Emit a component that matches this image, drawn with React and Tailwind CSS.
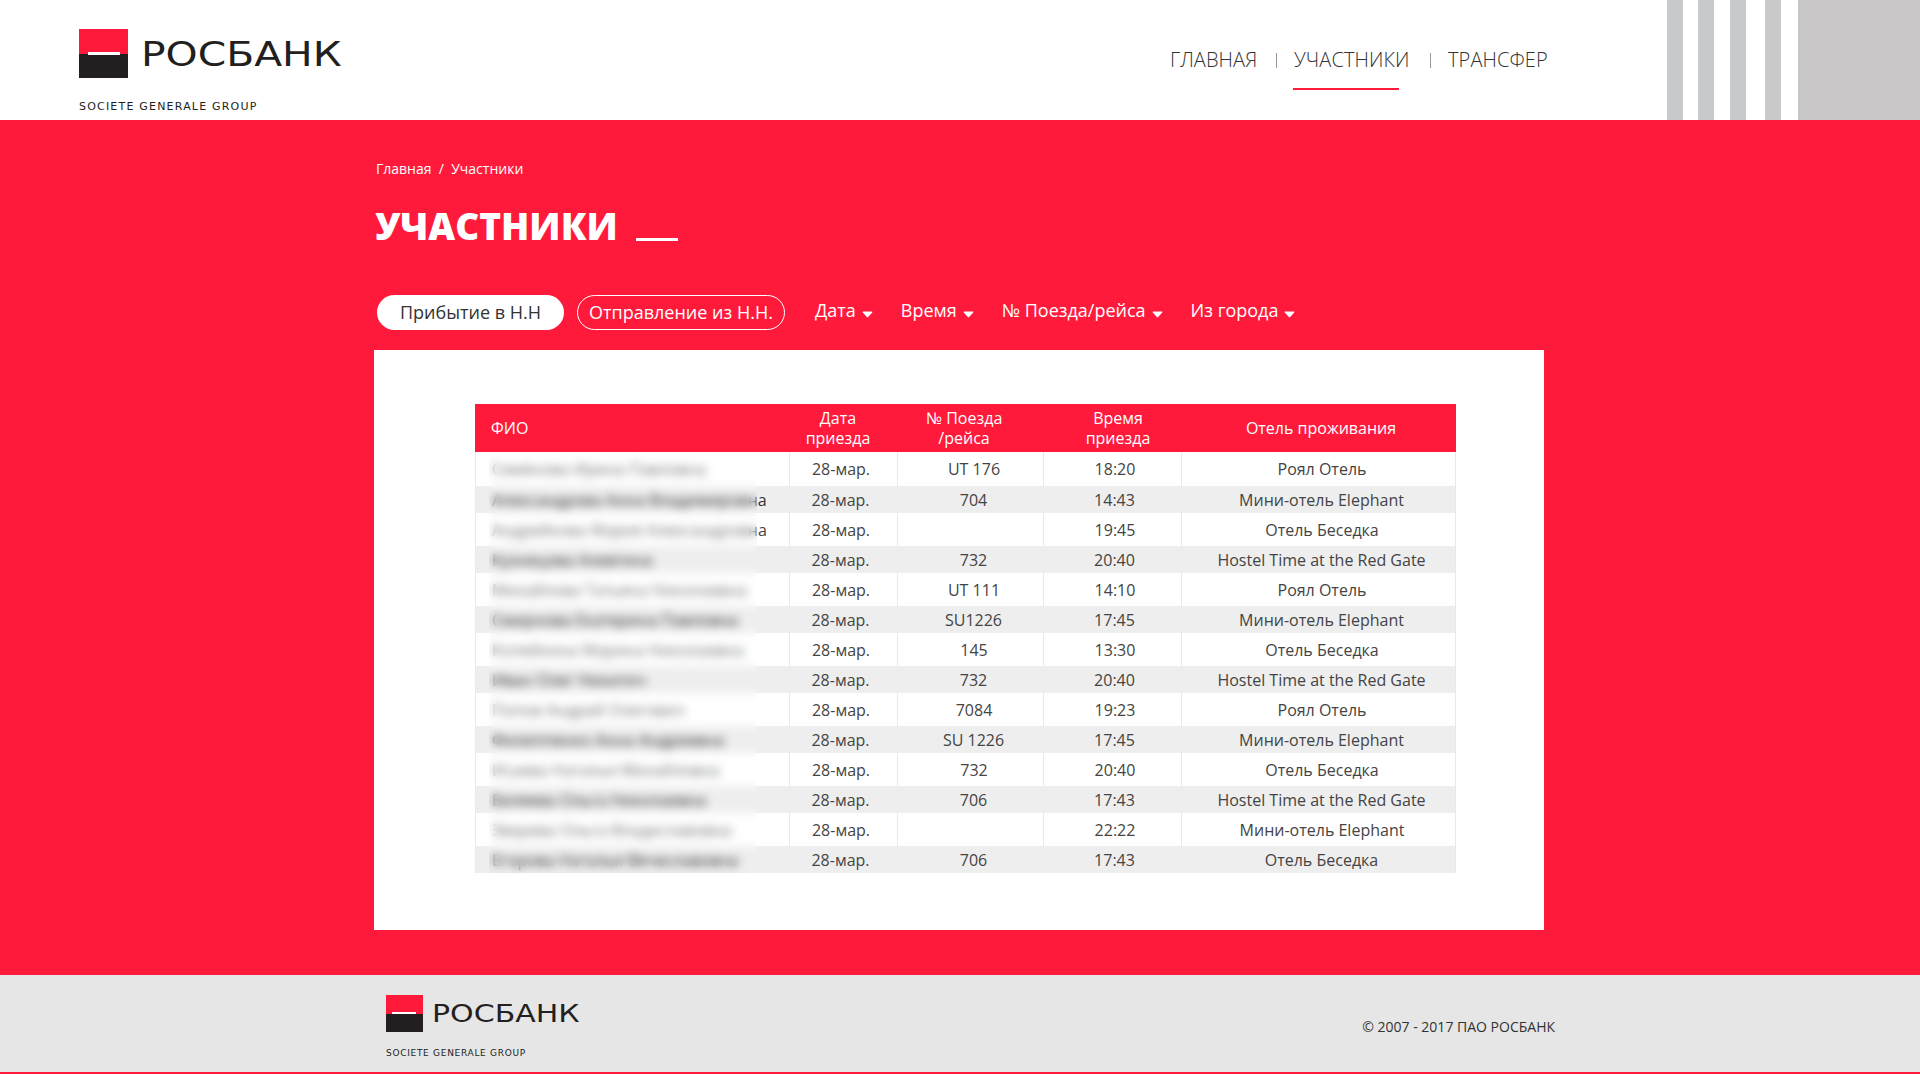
const rows = [
  { name: 'Семёнова Ирина Павловна', date: '28-мар.', num: 'UT 176', time: '18:20', hotel: 'Роял Отель' },
  { name: 'Александрова Анна Владимировна', date: '28-мар.', num: '704', time: '14:43', hotel: 'Мини-отель Elephant' },
  { name: 'Андрейкова Мария Александров', tail: 'на', date: '28-мар.', num: '', time: '19:45', hotel: 'Отель Беседка' },
  { name: 'Кузнецова Алевтина', date: '28-мар.', num: '732', time: '20:40', hotel: 'Hostel Time at the Red Gate' },
  { name: 'Михайлова Татьяна Николаевна', date: '28-мар.', num: 'UT 111', time: '14:10', hotel: 'Роял Отель' },
  { name: 'Смирнова Екатерина Павловна', date: '28-мар.', num: 'SU1226', time: '17:45', hotel: 'Мини-отель Elephant' },
  { name: 'Копейкина Марина Николаевна', date: '28-мар.', num: '145', time: '13:30', hotel: 'Отель Беседка' },
  { name: 'Иван Олег Никитич', date: '28-мар.', num: '732', time: '20:40', hotel: 'Hostel Time at the Red Gate' },
  { name: 'Попов Андрей Олегович', date: '28-мар.', num: '7084', time: '19:23', hotel: 'Роял Отель' },
  { name: 'Филиппенко Анна Андреевна', date: '28-мар.', num: 'SU 1226', time: '17:45', hotel: 'Мини-отель Elephant' },
  { name: 'Исаева Наталья Михайловна', date: '28-мар.', num: '732', time: '20:40', hotel: 'Отель Беседка' },
  { name: 'Беляева Ольга Николаевна', date: '28-мар.', num: '706', time: '17:43', hotel: 'Hostel Time at the Red Gate' },
  { name: 'Зверева Ольга Владиславовна', date: '28-мар.', num: '', time: '22:22', hotel: 'Мини-отель Elephant' },
  { name: 'Егорова Наталья Вячеславовна', date: '28-мар.', num: '706', time: '17:43', hotel: 'Отель Беседка' },
]

const filters = ['Дата', 'Время', '№ Поезда/рейса', 'Из города']

function Logo({ small }) {
  if (small) {
    return (
      <div className="flex flex-col">
        <div className="flex items-center">
          <LogoSquare size="w-[37px] h-[37px]" bar="w-[24px] h-[2px] top-[17px] left-[6px]" />
          <span className="ml-[9px] origin-left scale-x-[1.2] text-[25px] leading-none text-[#231f20] font-['DejaVu_Sans',sans-serif]">
            РОСБАНК
          </span>
        </div>
        <div className="mt-[17px] text-[9px] leading-none tracking-[0.7px] text-[#231f20] font-['DejaVu_Sans',sans-serif] whitespace-nowrap">
          SOCIETE GENERALE GROUP
        </div>
      </div>
    )
  }
  return (
    <div className="flex flex-col">
      <div className="flex items-center">
        <LogoSquare size="w-[49px] h-[49px]" bar="w-[32px] h-[3px] top-[23px] left-[9px]" />
        <span className="ml-[13px] origin-left scale-x-[1.2] text-[34px] leading-none text-[#231f20] font-['DejaVu_Sans',sans-serif]">
          РОСБАНК
        </span>
      </div>
      <div className="mt-[23px] text-[11px] leading-none tracking-[1.2px] text-[#231f20] font-['DejaVu_Sans',sans-serif] whitespace-nowrap">
        SOCIETE GENERALE GROUP
      </div>
    </div>
  )
}

function LogoSquare({ size, bar }) {
  return (
    <div className={`relative flex flex-col shrink-0 ${size}`}>
      <div className="flex-1 bg-[#ff1a3c]" />
      <div className="flex-1 bg-[#231f20]" />
      <div className={`absolute bg-white ${bar}`} />
    </div>
  )
}

function Caret() {
  return (
    <svg width="11" height="7" viewBox="0 0 11 7" className="mt-[7px] ml-[6px]">
      <path d="M1.2 0.6 H9.8 Q10.8 0.6 10.2 1.6 L6.2 6 Q5.5 6.7 4.8 6 L0.8 1.6 Q0.2 0.6 1.2 0.6 Z" fill="#fff" />
    </svg>
  )
}

export default function App() {
  return (
    <div className="flex flex-col h-[1074px] bg-white font-['Open_Sans',sans-serif]">
      <header className="flex h-[120px] shrink-0 bg-white">
        <div className="pl-[79px] pt-[29px] w-[1170px] shrink-0">
          <Logo />
        </div>
        <nav className="flex items-start pt-[48px] text-[20px] leading-[24px] font-light text-[#333] tracking-[0.1px]">
          <span className="w-[106px]">ГЛАВНАЯ</span>
          <span className="mt-[5px] h-[15px] w-px bg-[#999]" />
          <div className="relative ml-[17px] w-[136px]">
            УЧАСТНИКИ
            <div className="absolute -left-px top-[40px] h-[2px] w-[106px] bg-[#ff1a3c]" />
          </div>
          <span className="mt-[5px] h-[15px] w-px bg-[#999]" />
          <span className="ml-[17px]">ТРАНСФЕР</span>
        </nav>
        <div className="ml-auto flex">
          <div className="w-[16px] bg-[#c8c9cb]" />
          <div className="ml-[15px] w-[16px] bg-[#c8c9cb]" />
          <div className="ml-[16px] w-[16px] bg-[#c8c9cb]" />
          <div className="ml-[19px] w-[16px] bg-[#c8c9cb]" />
          <div className="ml-[17px] w-[122px] bg-[#c9c6c7]" />
        </div>
      </header>

      <main className="flex-1 bg-[#ff1a3c] pl-[374px] text-white">
        <div className="pt-[39px] pl-[2px] text-[14px] leading-[20px]">
          Главная&nbsp; /&nbsp; Участники
        </div>
        <div className="mt-[21px] flex items-end">
          <h1 className="pl-[1px] text-[37px] leading-[52px] font-extrabold">УЧАСТНИКИ</h1>
          <div className="ml-[18px] mb-[11px] h-[3px] w-[42px] bg-white" />
        </div>
        <div className="mt-[43px] flex items-center pl-[3px] text-[18px]">
          <button className="h-[35px] w-[187px] rounded-full bg-white text-[#333]">Прибытие в Н.Н</button>
          <button className="ml-[13px] h-[35px] w-[208px] rounded-full border border-white">Отправление из Н.Н.</button>
          <div className="ml-[30px] flex items-center gap-[28px] pb-[4px]">
            {filters.map((f) => (
              <div key={f} className="flex items-center">
                {f}
                <Caret />
              </div>
            ))}
          </div>
        </div>
        <div className="mt-[20px] h-[580px] w-[1170px] bg-white pl-[101px] pt-[54px]">
          <div className="relative w-[981px]">
            <div className="grid h-[48px] grid-cols-[323px_80px_172px_136px_270px] items-center bg-[#ff1a3c] text-center text-[16px] leading-[20px]">
              <div className="pl-[16px] text-left">ФИО</div>
              <div>Дата<br />приезда</div>
              <div>№ Поезда<br />/рейса</div>
              <div>Время<br />приезда</div>
              <div>Отель проживания</div>
            </div>
            {rows.map((r, i) => (
              <div
                key={i}
                className={`grid grid-cols-[313px_108px_146px_138px_274px] items-center border-x border-[#e8e8e8] text-center text-[16px] text-[#444] ${
                  i % 2 ? 'h-[27px] bg-[#eeeeee]' : i === 0 ? 'h-[34px] bg-white' : 'h-[33px] bg-white'
                }`}
              >
                <div className="pl-[16px] text-left whitespace-nowrap">
                  <span className={i % 2 ? 'text-[#333]' : 'text-[#777]'}>{r.name}</span>
                  {r.tail && <span>{r.tail}</span>}
                </div>
                <div className={`flex h-full items-center justify-center pr-[5px] ${i % 2 ? '' : 'border-l border-[#e8e8e8]'}`}>{r.date}</div>
                <div className={`flex h-full items-center justify-center pl-[7px] ${i % 2 ? '' : 'border-l border-[#e8e8e8]'}`}>{r.num}</div>
                <div className={`flex h-full items-center justify-center pl-[5px] ${i % 2 ? '' : 'border-l border-[#e8e8e8]'}`}>{r.time}</div>
                <div className={`flex h-full items-center justify-center pl-[7px] ${i % 2 ? '' : 'border-l border-[#e8e8e8]'}`}>{r.hotel}</div>
              </div>
            ))}
            {/* names are hidden behind a blur in the reference */}
            <div className="absolute left-[14px] top-[48px] bottom-0 w-[268px] backdrop-blur-[5px]" />
          </div>
        </div>
      </main>

      <footer className="flex h-[99px] shrink-0 items-start border-b-2 border-[#ff1a3c] bg-[#e6e6e6] pl-[386px] pr-[365px]">
        <div className="pt-[20px]">
          <Logo small />
        </div>
        <div className="ml-auto pt-[42px] text-[14px] leading-[20px] text-[#333] whitespace-nowrap">
          © 2007 - 2017 ПАО РОСБАНК
        </div>
      </footer>
    </div>
  )
}
